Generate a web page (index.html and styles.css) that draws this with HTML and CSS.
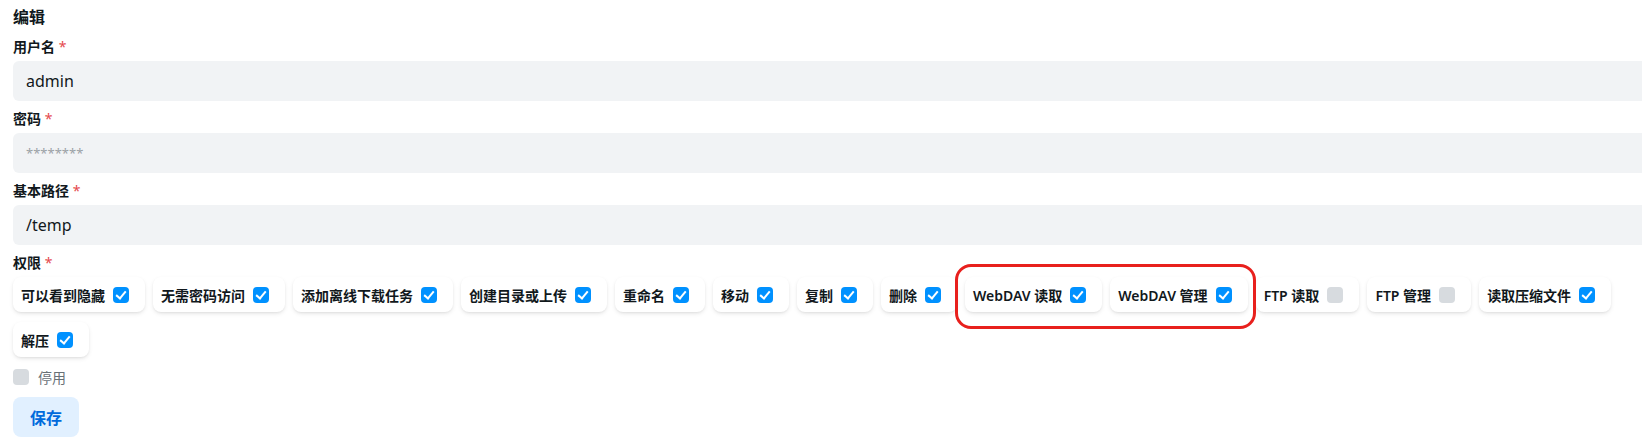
FILE: index.html
```html
<!DOCTYPE html>
<html lang="zh-CN">
<head>
    <meta charset="UTF-8">
    <meta name="viewport" content="width=device-width, initial-scale=1.0">
    <title>编辑用户</title>
    <link rel="stylesheet" href="styles.css">
</head>
<body>

<div class="page">
    <h2 class="title">编辑</h2>

    <div class="field">
        <label class="label">用户名 <span class="req">*</span></label>
        <div class="input">admin</div>
    </div>

    <div class="field">
        <label class="label">密码 <span class="req">*</span></label>
        <div class="input placeholder">********</div>
    </div>

    <div class="field">
        <label class="label">基本路径 <span class="req">*</span></label>
        <div class="input">/temp</div>
    </div>

    <div class="field">
        <label class="label">权限 <span class="req">*</span></label>
        <div class="perms">
            <div class="perm">可以看到隐藏 <span class="box on"></span></div>
            <div class="perm">无需密码访问 <span class="box on"></span></div>
            <div class="perm">添加离线下载任务 <span class="box on"></span></div>
            <div class="perm">创建目录或上传 <span class="box on"></span></div>
            <div class="perm">重命名 <span class="box on"></span></div>
            <div class="perm">移动 <span class="box on"></span></div>
            <div class="perm">复制 <span class="box on"></span></div>
            <div class="perm">删除 <span class="box on"></span></div>
            <div class="perm">WebDAV 读取 <span class="box on"></span></div>
            <div class="perm">WebDAV 管理 <span class="box on"></span></div>
            <div class="perm">FTP 读取 <span class="box"></span></div>
            <div class="perm">FTP 管理 <span class="box"></span></div>
            <div class="perm">读取压缩文件 <span class="box on"></span></div>
            <div class="perm">解压 <span class="box on"></span></div>
        </div>
    </div>

    <div class="disable">
        <span class="box"></span> 停用
    </div>

    <div>
        <button class="save-btn">保存</button>
    </div>

    <!-- annotation round the two webdav options -->
    <div class="mark"></div>
</div>

</body>
</html>
```

FILE: styles.css
```css
body {
    margin: 0;
    background: #fff;
    color: #11181c;
    font-family: "Noto Sans", "Noto Sans CJK SC", sans-serif;
    overflow: hidden;
}
.page {
    position: relative;
    width: 1650px;
    padding: 5px 13px 0;
    display: flex;
    flex-direction: column;
    gap: 8px;
}
.title {
    margin: 0;
    font-size: 16px;
    line-height: 24px;
    font-weight: 700;
}
.field {
    display: flex;
    flex-direction: column;
    gap: 4px;
}
.label {
    font-size: 14px;
    line-height: 20px;
    font-weight: 600;
}
.req {
    color: #e5484d;
    font-weight: 400;
}
.input {
    height: 40px;
    box-sizing: border-box;
    padding: 0 13px;
    background: #f1f3f5;
    border-radius: 6px;
    font-size: 16px;
    line-height: 40px;
}
.input.placeholder {
    color: #9ba1a6;
    font-size: 13px;
}
.perms {
    display: flex;
    flex-wrap: wrap;
    gap: 10px 8px;
}
.perm {
    height: 35px;
    box-sizing: border-box;
    padding: 0 16px 0 8px;
    display: flex;
    align-items: center;
    gap: 8px;
    border-radius: 8px;
    background: #fff;
    box-shadow: 0 2px 5px -1px rgba(0, 0, 0, 0.13), 0 1px 2px rgba(0, 0, 0, 0.04);
    font-size: 14px;
    font-weight: 600;
    white-space: nowrap;
}
.box {
    width: 16px;
    height: 16px;
    border-radius: 4px;
    background: #d7dbdf;
    display: inline-block;
    position: relative;
}
.box.on {
    background: #0091ff;
}
.box.on::after {
    content: "";
    position: absolute;
    left: 5px;
    top: 2px;
    width: 4px;
    height: 8px;
    border: solid #fff;
    border-width: 0 2px 2px 0;
    transform: rotate(40deg);
}
.disable {
    margin-top: 2px;
    display: flex;
    align-items: center;
    gap: 9px;
    height: 20px;
    font-size: 14px;
    color: #687076;
}
.save-btn {
    margin-top: 2px;
    height: 40px;
    padding: 0 17px;
    border: none;
    border-radius: 8px;
    background: #e1f0ff;
    color: #006adc;
    font-family: inherit;
    font-size: 16px;
    font-weight: 600;
}
.mark {
    position: absolute;
    left: 955px;
    top: 264px;
    width: 295px;
    height: 59px;
    border: 3px solid #e8201d;
    border-radius: 16px;
}
```
